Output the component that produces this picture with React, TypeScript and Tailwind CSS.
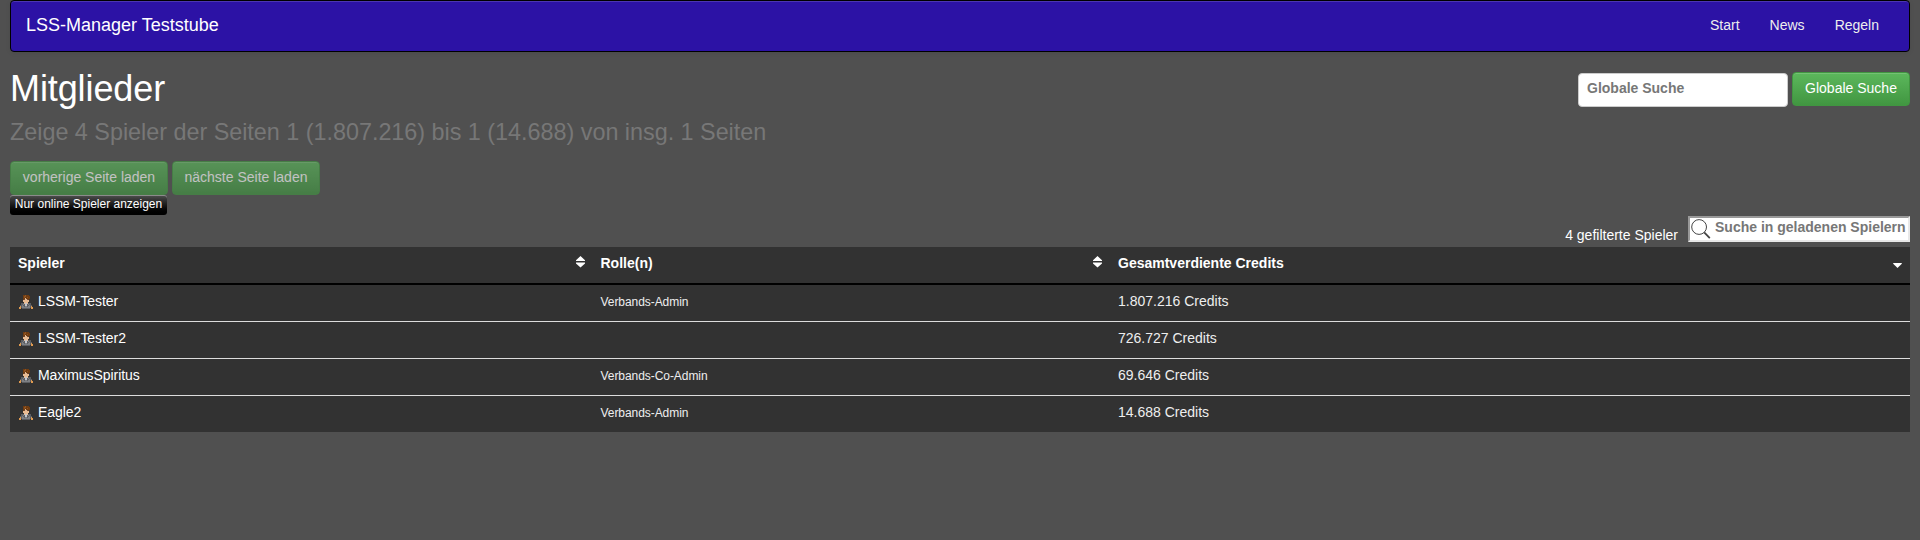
const players = [
  { name: "LSSM-Tester", role: "Verbands-Admin", credits: "1.807.216" },
  { name: "LSSM-Tester2", role: "", credits: "726.727" },
  { name: "MaximusSpiritus", role: "Verbands-Co-Admin", credits: "69.646" },
  { name: "Eagle2", role: "Verbands-Admin", credits: "14.688" },
];

const columns = "grid grid-cols-[583px_517px_800px]";
const greenButton =
  "h-[34px] rounded-[4px] border border-[#419641] bg-gradient-to-b from-[#5cb85c] to-[#419641] pb-[2px] text-white shadow-[inset_0_1px_0_rgba(255,255,255,0.15)]";

const palette: Record<string, string> = {
  b: "#6e3c12",
  o: "#8f5220",
  s: "#e8bb92",
  e: "#6b4a3a",
  g: "#5c5e62",
  l: "#7e8084",
  w: "#c5c7cc",
  h: "#df9a50",
};

const userPixels = [
  "....bbobbb....",
  "....boobbbb...",
  "....bobbobb...",
  "....bbsbbbb...",
  "....besseb....",
  "....ssssss....",
  "....ssssss....",
  ".....ssss.....",
  "..gggswwsggg..",
  "..gglgwwglgg..",
  ".gglggwwgglgg.",
  ".hgllgllgllgh.",
  "hhgllllllllghh",
  "hh.gggggggg.hh",
];

function UserIcon() {
  return (
    <svg width="14" height="14" viewBox="0 0 14 14" className="mr-[5px] shrink-0" shapeRendering="crispEdges">
      {userPixels.flatMap((row, y) =>
        [...row].map((c, x) =>
          c === "." ? null : <rect key={`${x}-${y}`} x={x} y={y} width="1" height="1" fill={palette[c]} />,
        ),
      )}
    </svg>
  );
}

function SortIcon() {
  return (
    <svg width="9" height="12" viewBox="0 0 9 12" fill="#fff" className="mt-[3px]">
      <path d="M4.5 0 9 4.2V5H0v-.8zM0 6.5h9v.9L4.5 11.6 0 7.4z" />
    </svg>
  );
}

export default function App() {
  return (
    <div className="h-[540px] bg-[#505050] px-[10px] font-['Liberation_Sans',Arial,sans-serif] text-[14px] leading-5 text-white">
      <nav className="flex h-[52px] justify-between rounded-[4px] border border-black bg-[#2c12a5] px-[15px] shadow-[inset_0_1px_0_rgba(255,255,255,0.15),0_1px_5px_rgba(0,0,0,0.075)]">
        <a className="pt-[14px] text-[18px]">LSS-Manager Teststube</a>
        <ul className="flex pr-[15px] pt-[14px] text-[#eee]">
          <li className="pr-[30px]">Start</li>
          <li className="pr-[30px]">News</li>
          <li>Regeln</li>
        </ul>
      </nav>

      <header className="flex h-[109px] justify-between">
        <div>
          <h1 className="mt-[17px] text-[36px] leading-[40px] tracking-[-0.1px]">Mitglieder</h1>
          <h3 className="mt-[10px] text-[23.4px] leading-[26px] tracking-[-0.025px] text-[#777]">
            Zeige 4 Spieler der Seiten 1 (1.807.216) bis 1 (14.688) von insg. 1 Seiten
          </h3>
        </div>
        <form className="flex gap-[4px] pt-[20px]">
          <input
            placeholder="Globale Suche"
            className="mt-[1px] h-[34px] w-[210px] rounded-[4px] border border-[#ccc] bg-white px-[8px] pb-[4px] font-bold placeholder:text-[#777]"
          />
          <button type="button" className={`${greenButton} w-[118px]`}>Globale Suche</button>
        </form>
      </header>

      <div className="flex gap-[4px]">
        <button className={`${greenButton} w-[158px] opacity-65`}>vorherige Seite laden</button>
        <button className={`${greenButton} w-[148px] opacity-65`}>nächste Seite laden</button>
      </div>

      <div className="flex h-[52px] items-start justify-between">
        <button className="h-[20px] w-[157px] rounded-[3px] bg-gradient-to-b from-[#505050] to-black pb-[2px] text-[12px] leading-[18px] shadow-[inset_0_1px_0_rgba(255,255,255,0.35)]">
          Nur online Spieler anzeigen
        </button>
        <div className="flex pt-[21px]">
          <span className="mr-[10px] pt-[9px]">4 gefilterte Spieler</span>
          <label className="flex h-[26px] w-[222px] border-2 border-b-[#e8e8e8] border-l-[#999] border-r-[#e8e8e8] border-t-[#999] bg-white pl-[1px]">
            <svg width="20" height="20" viewBox="0 0 20 20" fill="none" stroke="#444" className="mt-[1px] shrink-0">
              <circle cx="8.1" cy="8" r="7.4" strokeWidth="1" />
              <path d="m13.2 13.3 5.6 5.8" strokeWidth="1.8" />
            </svg>
            <input
              placeholder="Suche in geladenen Spielern"
              className="ml-[4px] h-[18px] min-w-0 flex-1 font-bold outline-none placeholder:text-[#777]"
            />
          </label>
        </div>
      </div>

      <div className="bg-[#323232]">
        <div className={`${columns} h-[38px] border-b-2 border-black pt-[6px] font-bold`}>
          <div className="flex justify-between px-[8px]">
            Spieler
            <SortIcon />
          </div>
          <div className="flex justify-between pl-[7.5px] pr-[8px]">
            Rolle(n)
            <SortIcon />
          </div>
          <div className="flex justify-between px-[8px]">
            Gesamtverdiente Credits
            <svg width="9" height="5" viewBox="0 0 9 5" fill="#fff" className="mt-[10px]">
              <path d="M.2 0h8.6v.8L4.5 5 .2.8z" />
            </svg>
          </div>
        </div>
        {players.map((p) => (
          <div key={p.name} className={`${columns} h-[37px] border-b border-[#ddd] pt-[6px] last:h-[36px] last:border-b-0`}>
            <div className="flex pl-[9px]">
              <div className="pt-[4px]">
                <UserIcon />
              </div>
              <span className="tracking-[-0.07px]">{p.name}</span>
            </div>
            <div className="pl-[7.5px] pt-px text-[12px] tracking-[-0.06px] text-[#eee]">{p.role}</div>
            <div className="pl-[8px] text-[#eee]">{p.credits} Credits</div>
          </div>
        ))}
      </div>
    </div>
  );
}
